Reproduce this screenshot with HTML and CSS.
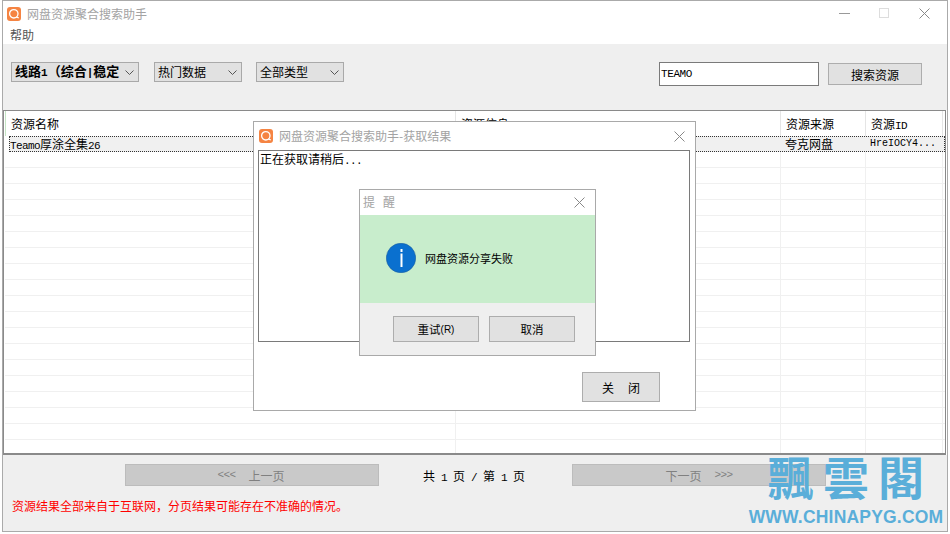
FILE: index.html
```html
<!DOCTYPE html>
<html lang="zh">
<head>
<meta charset="utf-8">
<title>网盘资源聚合搜索助手</title>
<link rel="stylesheet" href="styles.css">
</head>
<body>
<div class="window">
  <div class="titlebar">
    <svg class="appicon" viewBox="0 0 14 14"><rect width="14" height="14" rx="3" fill="#f58442"/><circle cx="6.8" cy="6.8" r="4.2" fill="none" stroke="#fff" stroke-width="1.3"/><path d="M9.2 9.8 11.8 11" stroke="#fff" stroke-width="1.3"/></svg>
    <span class="title">网盘资源聚合搜索助手</span>
    <div class="winctl">
      <svg width="11" height="11" viewBox="0 0 11 11"><path d="M0 5.5h11" stroke="#999"/></svg>
      <svg width="11" height="11" viewBox="0 0 11 11"><rect x=".5" y=".5" width="9" height="9" fill="none" stroke="#ddd"/></svg>
      <svg width="11" height="11" viewBox="0 0 11 11"><path d="M.5.5l10 10M10.5.5l-10 10" stroke="#888" fill="none"/></svg>
    </div>
  </div>
  <div class="menubar">帮助</div>
  <div class="toolbar">
    <div class="select s1"><b>线路<span class="lat">1</span>（综合<span class="lat">|</span>稳定</b><svg class="chev" width="9" height="5" viewBox="0 0 9 5"><path d="M.5.5l4 4 4-4" fill="none" stroke="#555"/></svg></div>
    <div class="select s2"><span>热门数据</span><svg class="chev" width="9" height="5" viewBox="0 0 9 5"><path d="M.5.5l4 4 4-4" fill="none" stroke="#555"/></svg></div>
    <div class="select s2"><span>全部类型</span><svg class="chev" width="9" height="5" viewBox="0 0 9 5"><path d="M.5.5l4 4 4-4" fill="none" stroke="#555"/></svg></div>
    <div class="search">TEAMO</div>
    <div class="btn searchbtn">搜索资源</div>
  </div>
  <div class="table">
    <div class="row head"><span>资源名称</span><span>资源信息</span><span>资源来源</span><span>资源<i class="lat">ID</i></span></div>
    <div class="row sel"><span><i class="lat">Teamo</i>厚涂全集<i class="lat">26</i></span><span></span><span>夸克网盘</span><span class="id">HreIOCY4...</span></div>
    <div class="row"><span></span><span></span><span></span><span></span></div>
    <div class="row"><span></span><span></span><span></span><span></span></div>
    <div class="row"><span></span><span></span><span></span><span></span></div>
    <div class="row"><span></span><span></span><span></span><span></span></div>
    <div class="row"><span></span><span></span><span></span><span></span></div>
    <div class="row"><span></span><span></span><span></span><span></span></div>
    <div class="row"><span></span><span></span><span></span><span></span></div>
    <div class="row"><span></span><span></span><span></span><span></span></div>
    <div class="row"><span></span><span></span><span></span><span></span></div>
    <div class="row"><span></span><span></span><span></span><span></span></div>
    <div class="row"><span></span><span></span><span></span><span></span></div>
    <div class="row"><span></span><span></span><span></span><span></span></div>
    <div class="row"><span></span><span></span><span></span><span></span></div>
    <div class="row"><span></span><span></span><span></span><span></span></div>
    <div class="row"><span></span><span></span><span></span><span></span></div>
    <div class="row"><span></span><span></span><span></span><span></span></div>
    <div class="row"><span></span><span></span><span></span><span></span></div>
    <div class="row"><span></span><span></span><span></span><span></span></div>
    <div class="row last"><span></span><span></span><span></span><span></span></div>
  </div>
  <div class="footer">
    <div class="pager">
      <div class="pagebtn prev"><span class="lat arrows">&lt;&lt;&lt;</span>上一页</div>
      <div class="pageinfo">共<i class="lat"> 1 </i>页<i class="lat"> / </i>第<i class="lat"> 1 </i>页</div>
      <div class="pagebtn">下一页<span class="lat arrows right">&gt;&gt;&gt;</span></div>
    </div>
    <div class="notice">资源结果全部来自于互联网，分页结果可能存在不准确的情况。</div>
  </div>
</div>

<div class="dialog result">
  <div class="dlgtitle">
    <svg class="appicon" viewBox="0 0 14 14"><rect width="14" height="14" rx="3" fill="#f58442"/><circle cx="6.8" cy="6.8" r="4.2" fill="none" stroke="#fff" stroke-width="1.3"/><path d="M9.2 9.8 11.8 11" stroke="#fff" stroke-width="1.3"/></svg>
    <span class="title">网盘资源聚合搜索助手-获取结果</span>
    <svg class="dlgclose" width="11" height="11" viewBox="0 0 11 11"><path d="M.5.5l10 10M10.5.5l-10 10" stroke="#888" fill="none"/></svg>
  </div>
  <div class="resultbox">正在获取请稍后<i class="lat">...</i></div>
  <div class="resultfoot"><div class="btn closebtn"><span class="wide">关</span>闭</div></div>
</div>

<div class="dialog alert">
  <div class="alerttitle">
    <span class="title"><span class="remind">提</span>醒</span>
    <svg class="dlgclose" width="11" height="11" viewBox="0 0 11 11"><path d="M.5.5l10 10M10.5.5l-10 10" stroke="#888" fill="none"/></svg>
  </div>
  <div class="alertbody">
    <svg width="30" height="30" viewBox="0 0 30 30"><circle cx="15" cy="15" r="14.7" fill="#0a70cf" stroke="#1c5f9e" stroke-width=".6"/><path d="M15.5 6v3M15.5 10.5v13.5" stroke="#fff" stroke-width="2"/></svg>
    <span>网盘资源分享失败</span>
  </div>
  <div class="alertfoot">
    <div class="btn alertbtn">重试<span class="accel">(R)</span></div>
    <div class="btn alertbtn">取消</div>
  </div>
</div>

<div class="watermark">
  <div class="wmcn">飄雲閣</div>
  <div class="wmen">WWW.CHINAPYG.COM</div>
</div>
</body>
</html>
```
FILE: styles.css
```css
* { box-sizing: border-box; }
html, body { margin: 0; padding: 0; }
body {
  width: 950px;
  height: 534px;
  overflow: hidden;
  background: #fff;
  position: relative;
  font-family: "Noto Sans CJK SC", "Liberation Mono", monospace;
  font-size: 12px;
  color: #000;
}
.lat {
  font-family: "Liberation Mono", monospace;
  font-size: 11px;
  letter-spacing: -.6px;
  font-style: normal;
  white-space: pre;
}
.window {
  margin-left: 2px;
  width: 946px;
  height: 532px;
  border: 1px solid #aaa;
  display: flex;
  flex-direction: column;
  background: #fff;
}
.titlebar {
  height: 25px;
  flex: none;
  display: flex;
  align-items: center;
  padding: 0 0 0 4px;
}
.appicon { width: 14px; height: 14px; flex: none; }
.title { color: #a3a3a3; font-size: 12px; margin-left: 6px; line-height: 14px; }
.winctl {
  margin-left: auto;
  display: flex;
  gap: 29px;
  padding-right: 17px;
  align-items: center;
}
.menubar {
  height: 18px;
  flex: none;
  padding-left: 7px;
  line-height: 18px;
  color: #555;
}
.toolbar {
  height: 66px;
  flex: none;
  background: #efefef;
  display: flex;
  align-items: flex-start;
  padding: 18px 25px 0 8px;
}
.select {
  height: 20px;
  border: 1px solid #a9a9a9;
  background: #e1e1e1;
  display: flex;
  align-items: center;
  justify-content: space-between;
  padding: 0 4px 0 3px;
  line-height: 18px;
}
.select b { font-weight: 700; font-size: 13px; white-space: nowrap; }
.select b .lat { font-size: 11px; font-weight: 700; letter-spacing: 0; }
.s1 { width: 128px; margin-right: 15px; }
.s2 { width: 88px; margin-right: 14px; }
.search {
  margin-left: auto;
  width: 160px;
  height: 24px;
  border: 1px solid #7a7a7a;
  background: #fff;
  font-family: "Liberation Mono", monospace;
  font-size: 11px;
  line-height: 22px;
  padding-left: 1px;
  letter-spacing: -.4px;
}
.btn {
  background: #e1e1e1;
  border: 1px solid #adadad;
  display: flex;
  align-items: center;
  justify-content: center;
}
.searchbtn { width: 94px; height: 22px; margin: 1px 0 0 9px; }
.table {
  height: 345px;
  flex: none;
  border: 1px solid #8a8a8a;
  border-bottom-width: 2px;
  background: #fff;
  margin-right: 1px;
  overflow: hidden;
}
.row {
  display: grid;
  grid-template-columns: 451px 325px 85px 77px;
  height: 16px;
  margin-left: 1px;
  border-bottom: 1px solid #f0f0f0;
}
.row span {
  border-right: 1px solid #f0f0f0;
  padding-left: 4px;
  line-height: 15px;
  white-space: nowrap;
  overflow: hidden;
}
.head { height: 25px; border-bottom: 0; }
.head span { padding-left: 5px; line-height: 25px; border-right-color: #e5e5e5; }
.head span:first-child { border-left: 1px solid #c5e5c5; }
.sel {
  background: #f0f0f0;
  outline: 1px dotted #333;
  outline-offset: -1px;
  margin-left: 5px;
  grid-template-columns: 446px 325px 85px 77px;
  border-bottom: 0;
}
.sel span { padding-left: 1px; border-right: 0; }
.sel span:nth-child(3) { padding-left: 5px; }
.sel .id { font-size: 10px; font-family: "Liberation Mono", monospace; padding-left: 5px; }
.last { border-bottom: 0; }
.footer {
  flex: 1;
  background: #efefef;
  padding-top: 9px;
}
.pager {
  display: flex;
  align-items: center;
  padding-left: 122px;
}
.pagebtn {
  width: 254px;
  height: 22px;
  background: #c9c9c9;
  border: 1px solid #bcbcbc;
  color: #808080;
  display: flex;
  align-items: center;
  justify-content: center;
}
.prev { padding-right: 2px; }
.arrows { margin-right: 13px; }
.arrows.right { margin: 0 0 0 13px; }
.pageinfo { width: 193px; padding-right: 3px; text-align: center; }
.notice {
  color: #f00;
  padding-left: 9px;
  margin-top: 10px;
  line-height: 20px;
}
.dialog {
  position: absolute;
  background: #fff;
  border: 1px solid #a9a9a9;
  display: flex;
  flex-direction: column;
}
.result { left: 253px; top: 121px; width: 443px; height: 290px; }
.dlgtitle {
  height: 28px;
  flex: none;
  display: flex;
  align-items: center;
  padding-left: 5px;
}
.dlgclose { margin-left: auto; margin-right: 10px; }
.resultbox {
  margin: 0 5px 0 4px;
  height: 192px;
  border: 1px solid #7a7a7a;
  padding: 0 1px;
  line-height: 15px;
}
.resultfoot {
  flex: 1;
  display: flex;
  justify-content: flex-end;
  align-items: flex-start;
  padding: 30px 35px 0 0;
}
.closebtn { width: 78px; height: 30px; }
.wide { margin-right: 14px; }
.alert { left: 359px; top: 189px; width: 237px; height: 167px; }
.alerttitle {
  height: 25px;
  flex: none;
  display: flex;
  align-items: center;
  padding-left: 3px;
}
.alerttitle .title { margin-left: 0; margin-top: -2px; }
.remind { margin-right: 8px; }
.alertbody {
  height: 88px;
  flex: none;
  background: #c8edcc;
  display: flex;
  align-items: center;
  gap: 9px;
  padding: 0 0 2px 26px;
  font-size: 11px;
}
.alertfoot {
  flex: 1;
  background: #efefef;
  display: flex;
  gap: 10px;
  padding: 13px 0 0 33px;
  font-size: 11.5px;
}
.alertbtn { width: 86px; height: 26px; }
.accel { font-family: "Liberation Sans", sans-serif; font-size: 10px; }
.watermark {
  position: absolute;
  left: 748px;
  top: 447px;
  width: 196px;
  color: #5aaed9;
  text-align: center;
}
.wmcn {
  font-family: "Noto Sans CJK TC", sans-serif;
  font-weight: 700;
  font-size: 46px;
  line-height: 56px;
  letter-spacing: 9px;
  margin-left: 9px;
}
.wmen {
  font-family: "Liberation Sans", sans-serif;
  font-weight: 700;
  font-size: 17.5px;
  letter-spacing: .2px;
  line-height: 20px;
  margin-top: 4px;
  white-space: nowrap;
}
```
